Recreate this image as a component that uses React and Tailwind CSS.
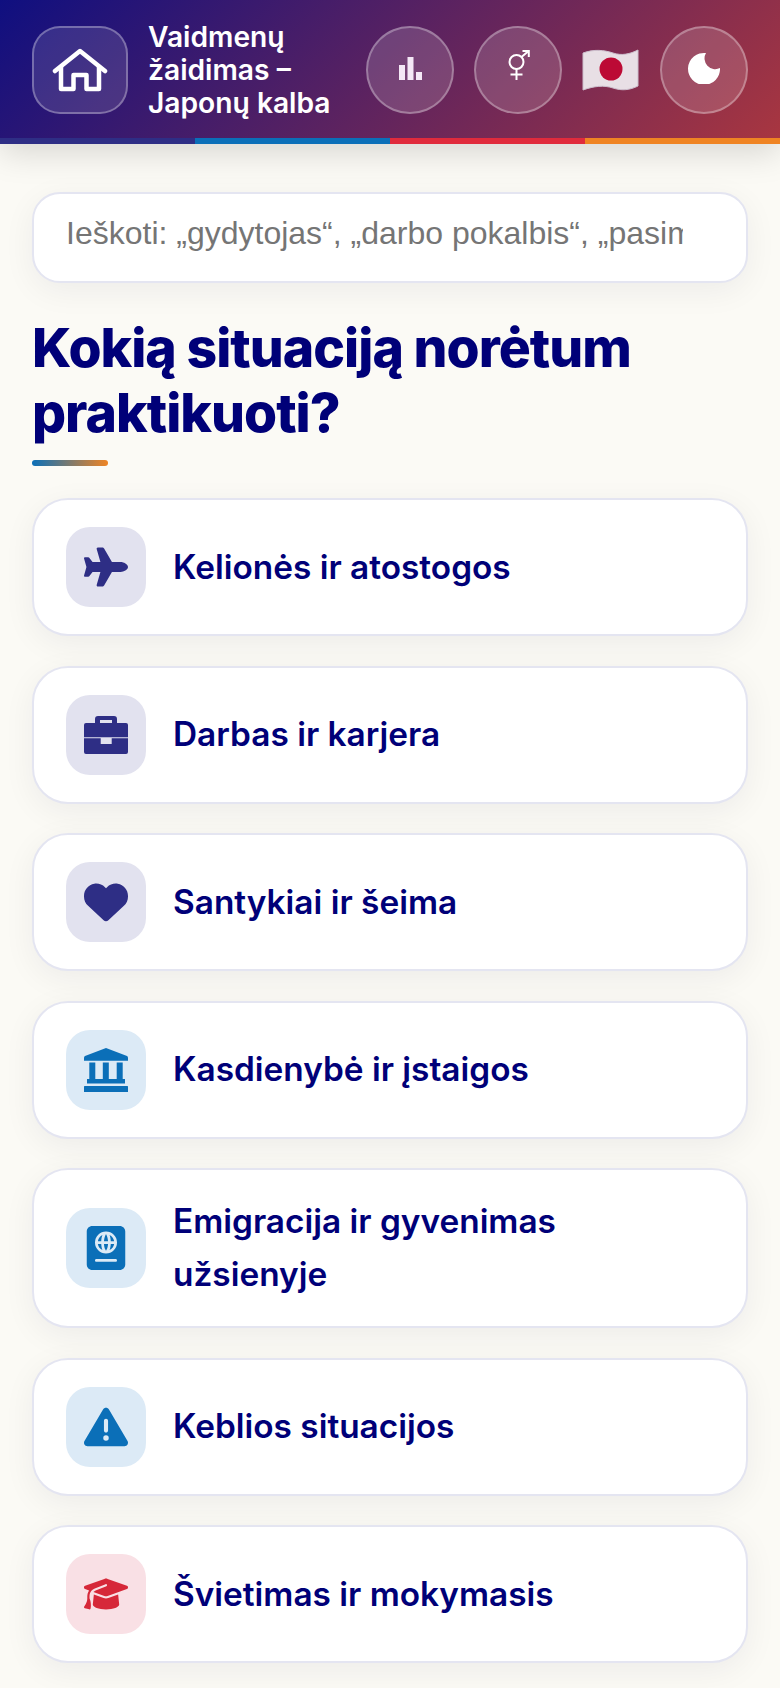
import React from "react";
import {
  FaPlane,
  FaHeart,
  FaPassport,
  FaTriangleExclamation,
  FaGraduationCap,
} from "react-icons/fa6";

const NAVY = "text-[#2e2e85]";
const BLUE = "text-[#0b6fb8]";
const RED = "text-[#d62839]";

const LandmarkIcon = ({ className }) => (
  <svg viewBox="0 0 44 44" className={className} fill="currentColor">
    <path d="M22 0 L43 8 Q44 8.5 44 10 V12.7 H0 V10 Q0 8.5 1 8 Z" />
    <rect x="5.3" y="14.5" width="6" height="17" />
    <rect x="18.8" y="14.5" width="6" height="17" />
    <rect x="32.7" y="14.5" width="6" height="17" />
    <rect x="3" y="31" width="38" height="4.5" />
    <rect x="0" y="38" width="44" height="6" rx="0.5" />
  </svg>
);

const BriefcaseIcon = ({ className }) => (
  <svg viewBox="0 0 44 44" className={className} fill="currentColor">
    <path d="M11 11 V6 Q11 3 14 3 H30 Q33 3 33 6 V11 H28 V7 H16 V11 Z" />
    <path d="M2 10 H42 Q44 10 44 12 V24.2 H0 V12 Q0 10 2 10 Z" />
    <path d="M0 25.2 H16.7 V31 H27.7 V25.2 H44 V39 Q44 41 42 41 H2 Q0 41 0 39 Z" />
  </svg>
);

const categories = [
  { label: "Kelionės ir atostogos", Icon: FaPlane, box: "bg-[#e2e2ef]", color: NAVY },
  { label: "Darbas ir karjera", Icon: BriefcaseIcon, box: "bg-[#e2e2ef]", color: NAVY },
  { label: "Santykiai ir šeima", Icon: FaHeart, box: "bg-[#e2e2ef]", color: NAVY },
  { label: "Kasdienybė ir įstaigos", Icon: LandmarkIcon, box: "bg-[#dceaf6]", color: BLUE },
  { label: "Emigracija ir gyvenimas užsienyje", Icon: FaPassport, box: "bg-[#dceaf6]", color: BLUE },
  { label: "Keblios situacijos", Icon: FaTriangleExclamation, box: "bg-[#dceaf6]", color: BLUE },
  { label: "Švietimas ir mokymasis", Icon: FaGraduationCap, box: "bg-[#f9e0e5]", color: RED },
];

const RoundButton = ({ children }) => (
  <button
    type="button"
    className="flex h-[88px] w-[88px] shrink-0 items-center justify-center rounded-full border-2 border-white/30 bg-white/15 text-white"
  >
    {children}
  </button>
);

const Header = () => (
  <header className="relative z-10 shadow-[0_8px_32px_rgba(0,0,0,0.15)]">
    <div className="flex h-[138px] items-center bg-[linear-gradient(135deg,#0f0f80,#a83640)] px-8 pt-[2px]">
      <button
        type="button"
        className="flex h-[88px] w-[96px] shrink-0 items-center justify-center rounded-[28px] border-2 border-white/30 bg-white/12 text-white"
      >
        <svg viewBox="0 0 56 44" className="h-[44px] w-[56px]" fill="none" stroke="currentColor" strokeWidth="4.5" strokeLinejoin="round" strokeLinecap="round">
          <path d="M3 23 L28 3 L53 23" />
          <path d="M9 19 V41 H21.5 V27 H34.5 V41 H47 V19" />
        </svg>
      </button>
      <div className="ml-[20px] w-[190px] font-['Inter',sans-serif] text-[28.2px] font-semibold leading-[33px] text-white">
        Vaidmenų žaidimas – Japonų kalba
      </div>
      <div className="ml-auto flex items-center">
        <RoundButton>
          <svg viewBox="0 0 23 23" className="mb-[3px] h-[23px] w-[23px] text-[#f4e8f6]" fill="currentColor">
            <rect x="0" y="8" width="6" height="15" />
            <rect x="8.5" y="0" width="6" height="23" />
            <rect x="17" y="15" width="6" height="8" />
          </svg>
        </RoundButton>
        <div className="ml-[20px]">
          <RoundButton>
            <svg viewBox="0 0 24 32" className="mb-[8px] h-[32px] w-[24px]" fill="none" stroke="currentColor" strokeWidth="2">
              <circle cx="10.5" cy="12" r="7" />
              <path d="M10.5 19 V30 M4.5 24.5 H16.5 M15.5 7 L22 1.5 M16.5 1 H22.8 V7" />
            </svg>
          </RoundButton>
        </div>
        <svg viewBox="0 0 58 42" className="ml-[20px] h-[42px] w-[58px] shrink-0">
          <path d="M1 4 C12 0 22 1 31 4 C40 7 48 5 56 1 V37 C48 41 40 42 31 39 C22 36 12 37 1 41 Z" fill="#e8dfe5" stroke="#cdbfcd" strokeWidth="1" />
          <circle cx="29" cy="20" r="11.5" fill="#bc0a35" />
        </svg>
        <div className="ml-[20px]">
          <RoundButton>
            <svg viewBox="0 0 32 32" className="mb-[4px] h-[32px] w-[32px]" fill="currentColor">
              <path d="M18 1 A16 16 0 1 0 32 16 A10.7 10.7 0 0 1 18 1 Z" />
            </svg>
          </RoundButton>
        </div>
      </div>
    </div>
    <div className="grid h-[6px] grid-cols-4">
      <div className="bg-[#2e2e85]" />
      <div className="bg-[#0b6fb8]" />
      <div className="bg-[#e02b3c]" />
      <div className="bg-[#ef8423]" />
    </div>
  </header>
);

const CategoryCard = ({ label, Icon, box, color }) => (
  <button
    type="button"
    className="flex min-h-[138px] items-center gap-[27px] rounded-[36px] border-2 border-[#e4e5f1] bg-white px-[32px] py-[25px] text-left shadow-[0_8px_32px_rgba(0,0,50,0.06)]"
  >
    <span className={`flex h-[80px] w-[80px] shrink-0 items-center justify-center rounded-[24px] ${box} ${color}`}>
      <Icon className="h-[44px] w-[44px]" />
    </span>
    <span className="font-['Inter',sans-serif] text-[33.4px] font-semibold leading-[52.8px] text-[#000078]">
      {label}
    </span>
  </button>
);

export default function App() {
  return (
    <div className="min-h-[1688px] bg-[#fbfaf5]">
      <Header />
      <main className="px-8 pt-[48px]">
        <input
          type="text"
          readOnly
          placeholder="Ieškoti: „gydytojas“, „darbo pokalbis“, „pasimatymas“…"
          className="h-[91px] w-full rounded-[28px] border-2 border-[#e4e5f1] bg-white pb-[9px] pl-[32px] pr-[63px] font-['Liberation_Sans',sans-serif] text-[32px] shadow-[0_8px_32px_rgba(0,0,50,0.06)] outline-none placeholder:text-[#757575]"
        />
        <h1 className="mt-[32px] font-['Inter',sans-serif] text-[53.5px] font-extrabold leading-[65px] tracking-[-1px] text-[#000078]">
          Kokią situaciją norėtum praktikuoti?
        </h1>
        <div className="mt-[15px] h-[6px] w-[76px] rounded-full bg-[linear-gradient(90deg,#0b6fb8,#ef8423)]" />
        <div className="mt-[32px] flex flex-col gap-[29.6px]">
          {categories.map((item) => (
            <CategoryCard key={item.label} {...item} />
          ))}
        </div>
      </main>
    </div>
  );
}
